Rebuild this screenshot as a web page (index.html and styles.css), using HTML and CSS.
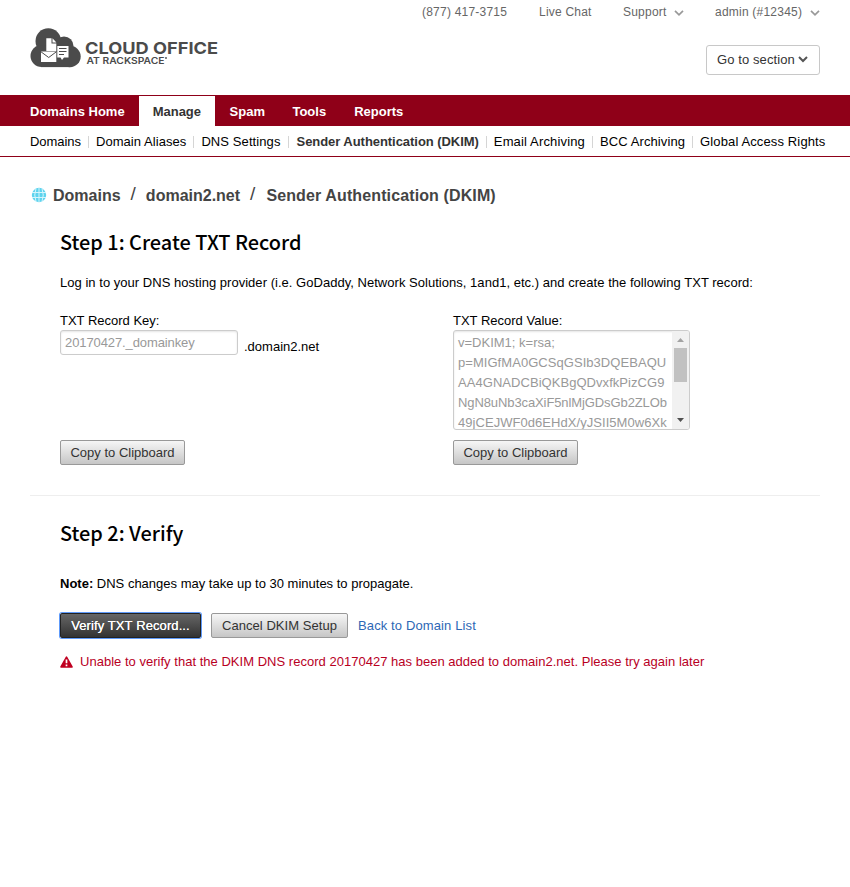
FILE: index.html
```html
<!DOCTYPE html>
<html lang="en">
<head>
<meta charset="utf-8">
<title>Sender Authentication (DKIM)</title>
<link rel="stylesheet" href="styles.css">
</head>
<body>
<header class="header">
  <svg class="logo" width="190" height="42" viewBox="0 0 190 42" role="img" aria-label="Cloud Office at Rackspace">
    <g fill="#4b4b4b">
      <circle cx="18.300" cy="13" r="12.800"/>
      <circle cx="34" cy="18" r="9.500"/>
      <circle cx="11.500" cy="28" r="11"/>
      <circle cx="40" cy="28.500" r="10.700"/>
      <rect x="11" y="18" width="29" height="21.100"/>
    </g>
    <path fill="#fff" d="M16.300 10.300h5.200v5.200h4.800v7.500H16.300z M22.500 10.300l3.900 4.200h-3.900z"/>
    <rect x="11" y="23.500" width="15.300" height="10.500" fill="#fff"/>
    <path d="M11 23.800l7.700 5.700L26.300 23.800" fill="none" stroke="#4b4b4b"/>
    <path d="M27.300 18h11.200V29.500H34L32 32l-1.500-2.500H27.300z" fill="#fff"/>
    <path d="M29 20.500h7.500M29 23.500h7.500M29 26.500h5" stroke="#4b4b4b"/>
    <text class="logo-name" x="55" y="26.300" textLength="133" lengthAdjust="spacingAndGlyphs">CLOUD OFFICE</text>
    <text class="logo-sub" x="56.500" y="35.800" textLength="78" lengthAdjust="spacingAndGlyphs">AT RACKSPACE</text>
    <circle cx="136" cy="30" r=".9" fill="#4b4b4b"/>
  </svg>
  <div class="tools">
    <nav class="top-links">
      <a class="phone">(877) 417-3715</a>
      <a class="chat">Live Chat</a>
      <a class="support">Support <svg width="10" height="6" viewBox="0 0 10 6"><path d="M1 .8l4 4 4-4"/></svg></a>
      <a class="admin">admin (#12345) <svg width="10" height="6" viewBox="0 0 10 6"><path d="M1 .8l4 4 4-4"/></svg></a>
    </nav>
    <button class="section-btn">Go to section<svg width="10" height="7" viewBox="0 0 10 7"><path d="M1 1l4 4 4-4"/></svg></button>
  </div>
</header>
<nav class="main-nav">
  <a>Domains Home</a><a class="active">Manage</a><a>Spam</a><a>Tools</a><a>Reports</a>
</nav>
<nav class="sub-nav">
  <a class="domains">Domains</a><a class="aliases">Domain Aliases</a><a class="dns">DNS Settings</a><a class="current">Sender Authentication (DKIM)</a><a class="archiving">Email Archiving</a><a class="bcc">BCC Archiving</a><a class="rights">Global Access Rights</a>
</nav>
<main class="page">
  <div class="crumbs">
    <svg class="globe" width="16" height="16" viewBox="0 0 16 16"><circle cx="8" cy="8" r="7.200" fill="#5dd3ee"/><path d="M8 1v14M1 5.500h14M1 10.500h14M5 1.500Q2.500 8 5 14.500M11 1.500Q13.500 8 11 14.500" fill="none" stroke="#d5f5fc"/></svg>
    <span>Domains</span><i>/</i><span>domain2.net</span><i>/</i><span class="here">Sender Authentication (DKIM)</span>
  </div>
  <section class="step">
    <h2>Step 1: Create TXT Record</h2>
    <p class="intro">Log in to your DNS hosting provider (i.e. GoDaddy, Network Solutions, 1and1, etc.) and create the following TXT record:</p>
    <div class="records">
      <div class="record">
        <div class="label">TXT Record Key:</div>
        <div class="key-row"><div class="field">20170427._domainkey</div><span>.domain2.net</span></div>
        <button class="btn">Copy to Clipboard</button>
      </div>
      <div class="record">
        <div class="label">TXT Record Value:</div>
        <div class="area">
          <div class="area-text"><div>v=DKIM1; k=rsa;</div><div class="loose">p=MIGfMA0GCSqGSIb3DQEBAQU</div><div class="loose">AA4GNADCBiQKBgQDvxfkPizCG9</div><div class="tight">NgN8uNb3caXiF5nlMjGDsGb2ZLOb</div><div class="loose">49jCEJWF0d6EHdX/yJSII5M0w6Xk</div></div>
          <div class="scroll">
            <svg width="7" height="4" viewBox="0 0 7 4"><path d="M0 4L3.500 0 7 4z" fill="#a3a3a3"/></svg>
            <div class="thumb"></div>
            <svg class="down" width="7" height="4" viewBox="0 0 7 4"><path d="M0 0h7L3.500 4z" fill="#505050"/></svg>
          </div>
        </div>
        <button class="btn">Copy to Clipboard</button>
      </div>
    </div>
  </section>
  <hr>
  <section class="step verify">
    <h2>Step 2: Verify</h2>
    <p class="note"><b>Note:</b> DNS changes may take up to 30 minutes to propagate.</p>
    <div class="actions">
      <button class="btn primary">Verify TXT Record...</button>
      <button class="btn cancel">Cancel DKIM Setup</button>
      <a>Back to Domain List</a>
    </div>
    <div class="error"><svg width="13" height="12" viewBox="0 0 13 12"><path d="M6.500 1.200L12 11H1z" fill="#c00021" stroke="#c00021" stroke-width="1.600" stroke-linejoin="round"/><path d="M6.500 3.500v3.700M6.500 8.500v1.700" stroke="#fff" stroke-width="1.700"/></svg><span>Unable to verify that the DKIM DNS record 20170427 has been added to domain2.net. Please try again later</span></div>
  </section>
</main>
</body>
</html>
```
FILE: styles.css
```css
* { box-sizing: border-box; }
body { margin: 0; background: #fff; color: #000; font: 13px/20px "Liberation Sans", Arial, sans-serif; white-space: nowrap; }
h2, p { margin: 0; }
button { font: inherit; white-space: nowrap; }
.header { height: 95px; padding: 0 30px; display: flex; justify-content: space-between; }
.logo { margin-top: 28px; }
.logo text { font-family: Inter, sans-serif; fill: #4b4b4b; }
.logo-name { font-size: 16.5px; font-weight: 700; }
.logo-sub { font-size: 9px; font-weight: 600; }
.tools { width: 398px; display: flex; flex-direction: column; align-items: flex-end; }
.top-links { width: 398px; height: 24px; padding-top: 2px; display: flex; color: #666; font-size: 12px; letter-spacing: .22px; }
.top-links svg { margin-left: 4px; fill: none; stroke: #999; stroke-width: 1.7; vertical-align: 0; }
.phone { width: 117px; }
.chat { width: 84px; }
.support { width: 92px; }
.section-btn { margin-top: 21px; width: 114px; height: 30px; padding: 0 0 0 10px; display: flex; align-items: center; gap: 3px; border: 1px solid #c8c8c8; border-radius: 3px; background: #fff; color: #333; letter-spacing: .1px; }
.section-btn svg { margin-top: -2px; fill: none; stroke: #555; stroke-width: 2; }
.main-nav { height: 31px; padding: 1px 0 0 16px; background: #8f0018; display: flex; color: #fff; font-weight: bold; line-height: 32px; }
.main-nav a { height: 30px; padding: 0 14px; }
.main-nav .active { background: #fff; color: #333; }
.main-nav .active + a { padding: 0 13.5px 0 14.5px; }
.sub-nav { height: 31px; padding: 1px 0 0 30px; display: flex; align-items: center; border-bottom: 1px solid #8f0018; }
.sub-nav a { display: flex; align-items: center; }
.sub-nav a + a::before { content: ""; width: 1px; height: 12px; margin: 0 7px; background: #d5d5d5; }
.domains { letter-spacing: -.05px; }
.aliases { letter-spacing: .06px; }
.dns { letter-spacing: .09px; }
.sub-nav .current { font-weight: bold; color: #333; letter-spacing: -.05px; }
.sub-nav .current::before { margin: 0 8px 0 7px; }
.archiving { letter-spacing: .15px; }
.bcc { letter-spacing: .1px; }
.rights { letter-spacing: .13px; }
.page { padding: 29px 30px 0; }
.crumbs { height: 20px; display: flex; align-items: center; color: #444; font-size: 16px; font-weight: bold; }
.globe { margin: -2px 6px 0 1px; }
.crumbs i { margin: -4px 10px 0; font-style: normal; font-weight: normal; font-size: 19px; }
.crumbs .here { margin-left: 1px; letter-spacing: .12px; }
.step { padding: 21px 0 0 30px; }
h2 { font: 500 19.9px/30px "Noto Sans CJK SC", sans-serif; }
.intro { margin-top: 16px; letter-spacing: .03px; }
.records { margin-top: 18px; display: grid; grid-template-columns: 393px 1fr; }
.record { display: flex; flex-direction: column; align-items: flex-start; }
.label { height: 19px; }
.key-row { height: 110px; display: flex; gap: 6px; }
.key-row span { padding-top: 7px; }
.field { width: 178px; height: 25px; padding: 2px 4px; border: 1px solid #ccc; border-radius: 3px; box-shadow: inset 0 1px 2px #e5e5e5; color: #999; letter-spacing: -.1px; }
.area { width: 237px; height: 100px; margin-bottom: 10px; border: 1px solid #ccc; border-radius: 3px; display: flex; color: #999; overflow: hidden; box-shadow: inset 0 1px 2px #e5e5e5; }
.area-text { flex: 1; min-width: 0; padding: 2px 0 0 4px; }
.loose { letter-spacing: .05px; }
.tight { letter-spacing: -.1px; }
.scroll { width: 17px; background: #f1f1f1; display: flex; flex-direction: column; align-items: center; padding-top: 7px; }
.thumb { flex: none; width: 13px; height: 34px; margin-top: 6px; background: #c1c1c1; }
.down { margin-top: auto; margin-bottom: 7px; }
.btn { height: 25px; width: 125px; padding: 1px 0 0; border: 1px solid #999; border-radius: 2px; background: linear-gradient(#f6f6f6, #c6c6c6); color: #333; }
hr { height: 1px; margin: 30px 0 0; border: 0; background: #eee; }
.verify { padding-top: 22px; }
.note { margin-top: 26px; }
.actions { margin-top: 19px; display: flex; align-items: center; gap: 10px; }
.primary { width: 141px; border-color: #222; background: linear-gradient(#666, #333); color: #fff; text-shadow: 0 0 .5px #fff; box-shadow: 0 0 0 1px #5e9afa; letter-spacing: .1px; }
.cancel { width: 137px; letter-spacing: .05px; }
.actions a { color: #2d67b5; letter-spacing: .12px; }
.error { margin-top: 14px; display: flex; align-items: center; gap: 7px; color: #b8001f; letter-spacing: .02px; }
```
